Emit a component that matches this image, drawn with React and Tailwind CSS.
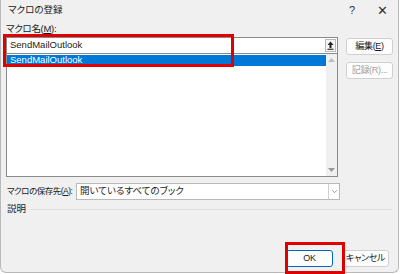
import { ChevronDown } from 'lucide-react'

const font = {
  fontFamily: '"Liberation Sans", "Noto Sans CJK JP", sans-serif',
}

function Btn({ children, disabled, primary, className = '' }) {
  return (
    <div
      className={`flex h-[17px] w-[47px] items-center justify-center whitespace-nowrap rounded-[3px] border bg-[#fdfdfd] text-[9px] leading-none tracking-[-0.3px] ${
        primary ? 'border-[#0067c0]' : 'border-[#d0d0d0]'
      } ${disabled ? 'text-[#a0a0a0]' : 'text-[#1b1b1b]'} ${className}`}
    >
      {children}
    </div>
  )
}

export default function App() {
  return (
    <div
      className="relative h-[274px] w-[400px] overflow-hidden bg-white [font-feature-settings:'palt']"
      style={font}
    >
      <div className="flex h-[273px] w-[399px] flex-col rounded-b-[6px] border border-t-0 border-[#b9b9b9] bg-[#f0f0f0] text-[#1b1b1b]">
        <div className="flex h-[21px] items-center justify-between pl-[7px] pr-[10px] text-[9.5px]">
          <span>マクロの登録</span>
          <div className="flex items-center gap-[22px] text-[11px] text-[#333]">
            <span>?</span>
            <span className="text-[13px] font-light">✕</span>
          </div>
        </div>

        <div className="flex flex-1 flex-col px-[5px]">
          <div className="h-[16px] pt-[3px] text-[9.5px] leading-none tracking-[-0.3px]">
            マクロ名(<span className="underline">M</span>):
          </div>

          <div className="flex">
            <div className="flex w-[334px] flex-col">
              <div className="flex h-[17px] items-center justify-between border border-[#8a8a8a] bg-white pl-[3px] pr-[1px] text-[9.5px]">
                <span>SendMailOutlook</span>
                <div className="flex h-[13px] w-[11px] items-center justify-center border border-[#b8b8b8] bg-[#f5f5f5]">
                  <svg width="7" height="9" viewBox="0 0 7 9">
                    <path d="M3.5 0.5 L6.5 4 H4.5 V7 H2.5 V4 H0.5 Z" fill="#222" />
                    <rect x="0.5" y="7.7" width="6" height="1.1" fill="#222" />
                  </svg>
                </div>
              </div>
              <div className="flex h-[123px] border border-t-0 border-[#8a8a8a] bg-white">
                <div className="flex-1 pt-[1px]">
                  <div className="flex h-[11px] items-center bg-[#0078d7] pl-[3px] text-[9.5px] text-white">
                    SendMailOutlook
                  </div>
                </div>
                <div className="flex w-[11px] flex-col items-center justify-between bg-[#f0f0f0] py-[4px]">
                  <svg width="7" height="4" viewBox="0 0 7 4">
                    <path d="M3.5 0 L7 4 H0 Z" fill="#bdbdbd" />
                  </svg>
                  <svg width="7" height="4" viewBox="0 0 7 4">
                    <path d="M0 0 H7 L3.5 4 Z" fill="#9a9a9a" />
                  </svg>
                </div>
              </div>
            </div>

            <div className="ml-[8px] flex flex-col gap-[7px] pt-[1px]">
              <Btn>編集(<span className="underline">E</span>)</Btn>
              <Btn disabled>記録(R)...</Btn>
            </div>
          </div>

          <div className="mt-[6px] flex h-[17px] items-center">
            <span className="w-[70px] whitespace-nowrap pl-[1px] text-[8.5px] tracking-[-0.5px]">
              マクロの保存先(<span className="underline">A</span>):
            </span>
            <div className="flex h-[17px] w-[264px] items-center justify-between border border-[#b8b8b8] bg-white pl-[3px] text-[9.5px]">
              <span>開いているすべてのブック</span>
              <div className="flex h-full w-[11px] items-center justify-center border-l border-[#d0d0d0]">
                <ChevronDown size={9} strokeWidth={1.5} color="#555" />
              </div>
            </div>
          </div>

          <div className="mt-[2px] flex h-[14px] items-center">
            <span className="pl-[1px] text-[9.5px]">説明</span>
            <div className="ml-[5px] mr-[1px] h-px flex-1 bg-[#dcdcdc]" />
          </div>

          <div className="mt-auto mb-[5px] flex justify-end gap-[9px] pr-[4px]">
            <Btn primary>OK</Btn>
            <Btn>キャンセル</Btn>
          </div>
        </div>
      </div>

      <div className="absolute left-[3px] top-[34px] h-[33px] w-[231px] border-[3px] border-[#e00000]" />
      <div className="absolute left-[285px] top-[242px] h-[32px] w-[60px] border-[3px] border-[#e00000]" />
    </div>
  )
}
